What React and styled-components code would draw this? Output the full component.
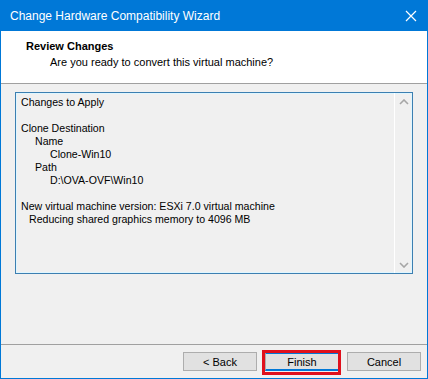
import React from "react";
import styled, { createGlobalStyle } from "styled-components";

const Global = createGlobalStyle`
  html, body { margin: 0; padding: 0; background: #ffffff; }
  * { box-sizing: border-box; }
`;

const Window = styled.div`
  width: 428px;
  height: 379px;
  border: 1px solid #0078d7;
  display: flex;
  flex-direction: column;
  background: #f0f0f0;
  font-family: "Liberation Sans", Arial, sans-serif;
`;

const TitleBar = styled.div`
  height: 30px;
  background: #0078d7;
  display: flex;
  align-items: center;
  justify-content: space-between;
  padding: 0 0 0 9px;
  color: #ffffff;
  font-size: 12px;
`;

const CloseBox = styled.div`
  width: 32px;
  height: 30px;
  display: flex;
  align-items: center;
  justify-content: center;
`;

const Header = styled.div`
  height: 53px;
  background: #ffffff;
  border-bottom: 1px solid #a0a0a0;
  padding: 8px 0 0 25px;
  font-size: 11px;
  color: #000;
`;

const HeaderTitle = styled.div`
  font-weight: 700;
  line-height: 15px;
`;

const HeaderSub = styled.div`
  padding-left: 24px;
  line-height: 16px;
`;

const Body = styled.div`
  flex: 1;
  padding: 8px 14px 0 14px;
`;

const TextBox = styled.div`
  height: 182px;
  border: 1px solid #3c7fb1;
  box-shadow: inset 0 0 0 1px #dff6ff;
  display: flex;
  background: #f0f0f0;
`;

const Content = styled.div`
  flex: 1;
  padding: 3px 0 0 5px;
  font-size: 10.6px;
  line-height: 13px;
  color: #000;
`;

const Line = styled.div`
  padding-left: ${(p) => p.indent || 0}px;
  min-height: 13px;
  white-space: pre;
`;

const ScrollBar = styled.div`
  width: 18px;
  border-left: 1px solid #ffffff;
  display: flex;
  flex-direction: column;
  justify-content: space-between;
  align-items: center;
  padding: 6px 0 5px 0;
`;

const Footer = styled.div`
  height: 34px;
  border-top: 1px solid #a0a0a0;
  display: flex;
  justify-content: flex-end;
  align-items: flex-start;
  padding: 7px 6px 0 0;
  gap: 8px;
`;

const Button = styled.div`
  width: 74px;
  height: 19px;
  background: #e1e1e1;
  border: 1px solid #adadad;
  border-top-color: ${(p) => (p.focused ? "#0078d7" : "#adadad")};
  border-bottom-color: ${(p) => (p.focused ? "#0078d7" : "#adadad")};
  border-top-width: ${(p) => (p.focused ? "2px" : "1px")};
  border-bottom-width: ${(p) => (p.focused ? "2px" : "1px")};
  display: flex;
  align-items: center;
  justify-content: center;
  font-size: 11px;
  color: #000;
  position: relative;
`;

const Highlight = styled.div`
  position: absolute;
  left: -4px;
  right: -3px;
  top: -4px;
  bottom: -6px;
  border: 3px solid #e0101c;
  pointer-events: none;
`;

const Chevron = ({ down }) => (
  <svg width="10" height="6" viewBox="0 0 10 6">
    <path
      d={down ? "M1 1 L5 5 L9 1" : "M1 5 L5 1 L9 5"}
      fill="none"
      stroke="#a6a6a6"
      strokeWidth="1.6"
    />
  </svg>
);

const lines = [
  ["Changes to Apply", 0],
  ["", 0],
  ["Clone Destination", 0],
  ["Name", 14],
  ["Clone-Win10", 29],
  ["Path", 14],
  ["D:\\OVA-OVF\\Win10", 29],
  ["", 0],
  ["New virtual machine version: ESXi 7.0 virtual machine", 0],
  ["Reducing shared graphics memory to 4096 MB", 8],
];

export default function App() {
  return (
    <>
      <Global />
      <Window>
        <TitleBar>
          <span>Change Hardware Compatibility Wizard</span>
          <CloseBox>
            <svg width="12" height="12" viewBox="0 0 12 12">
              <path d="M1 1 L11 11 M11 1 L1 11" stroke="#fff" strokeWidth="1.2" />
            </svg>
          </CloseBox>
        </TitleBar>
        <Header>
          <HeaderTitle>Review Changes</HeaderTitle>
          <HeaderSub>Are you ready to convert this virtual machine?</HeaderSub>
        </Header>
        <Body>
          <TextBox>
            <Content>
              {lines.map(([t, i], n) => (
                <Line key={n} indent={i}>
                  {t}
                </Line>
              ))}
            </Content>
            <ScrollBar>
              <Chevron />
              <Chevron down />
            </ScrollBar>
          </TextBox>
        </Body>
        <Footer>
          <Button>&lt; Back</Button>
          <Button focused>
            Finish
            <Highlight />
          </Button>
          <Button>Cancel</Button>
        </Footer>
      </Window>
    </>
  );
}
